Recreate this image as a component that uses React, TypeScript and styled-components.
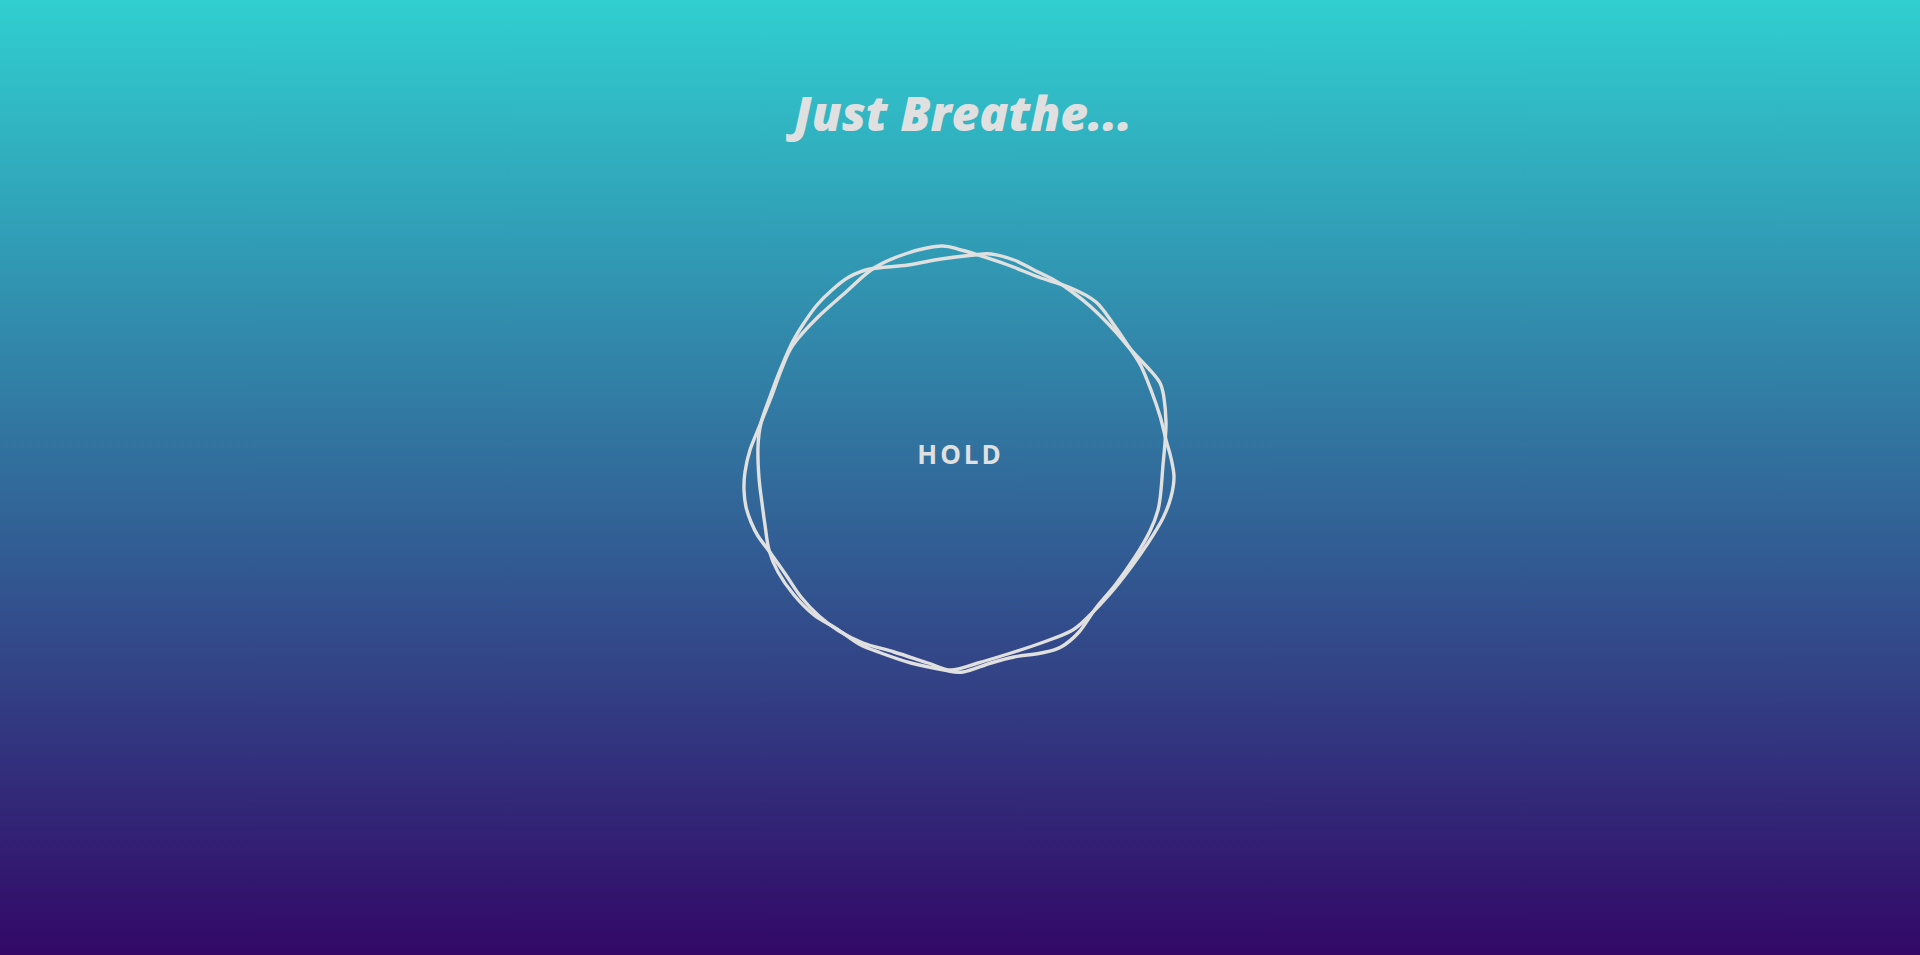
import React from "react";
import styled, { createGlobalStyle } from "styled-components";

const GlobalStyle = createGlobalStyle`
  html, body { margin: 0; padding: 0; }
  body { font-family: "Open Sans", "Noto Sans", sans-serif; }
`;

const Page = styled.main`
  height: 100vh;
  min-height: 955px;
  background: linear-gradient(to top, #330867 0%, #30cfd0 100%);
  display: flex;
  flex-direction: column;
  align-items: center;
  overflow: hidden;
`;

const Title = styled.h1`
  margin: 80px 0 0 6px;
  font-family: "Open Sans", "Noto Sans", sans-serif;
  font-size: 48px;
  line-height: 65px;
  font-weight: 800;
  font-style: italic;
  color: #e0e0e0;
`;

const Breather = styled.section`
  margin-top: 84px;
  width: 460px;
  height: 460px;
  position: relative;
  display: flex;
  align-items: center;
  justify-content: center;
`;

const Rings = styled.svg`
  position: absolute;
  inset: 0;
  width: 100%;
  height: 100%;
`;

const Phase = styled.span`
  position: relative;
  margin-bottom: 10px;
  margin-left: 1px;
  font-family: "Open Sans", "Noto Sans", sans-serif;
  font-size: 26px;
  font-weight: 700;
  letter-spacing: 3px;
  color: #e0e0e0;
`;

type Pt = [number, number];

const smoothClosed = (pts: Pt[]): string => {
  const n = pts.length;
  let d = `M ${pts[0][0]} ${pts[0][1]}`;
  for (let i = 0; i < n; i++) {
    const p0 = pts[(i - 1 + n) % n];
    const p1 = pts[i];
    const p2 = pts[(i + 1) % n];
    const p3 = pts[(i + 2) % n];
    const c1x = p1[0] + (p2[0] - p0[0]) / 6;
    const c1y = p1[1] + (p2[1] - p0[1]) / 6;
    const c2x = p2[0] - (p3[0] - p1[0]) / 6;
    const c2y = p2[1] - (p3[1] - p1[1]) / 6;
    d += ` C ${c1x.toFixed(1)} ${c1y.toFixed(1)} ${c2x.toFixed(1)} ${c2y.toFixed(1)} ${p2[0]} ${p2[1]}`;
  }
  return d + " Z";
};

const ringA: Pt[] = [
  [940, 246], [960, 250], [977, 255], [1007, 265], [1040, 278], [1070, 288],
  [1095, 302], [1113, 325], [1128, 347], [1140, 366], [1150, 390], [1159, 416],
  [1165, 440], [1170, 458], [1173, 477], [1170, 497], [1162, 518], [1147, 543],
  [1128, 570], [1108, 595], [1088, 616], [1070, 631], [1040, 643], [1010, 653],
  [977, 663], [950, 670], [927, 663], [893, 652], [862, 643], [838, 631],
  [818, 616], [800, 597], [785, 575], [768, 551], [757, 536], [750, 522],
  [745, 507], [743, 490], [744, 472], [749, 450], [759, 425], [771, 395],
  [781, 368], [792, 345], [815, 319], [845, 292], [873, 268], [907, 253],
];

const ringB: Pt[] = [
  [869, 269], [907, 265], [940, 259], [973, 255], [990, 254], [1013, 260],
  [1033, 270], [1053, 280], [1070, 291], [1090, 307], [1113, 330], [1131, 351],
  [1148, 369], [1159, 383], [1163, 398], [1165, 422], [1164, 443], [1162, 465],
  [1160, 490], [1157, 510], [1149, 531], [1134, 557], [1115, 584], [1095, 608],
  [1078, 632], [1060, 647], [1040, 653], [1013, 657], [990, 663], [962, 672],
  [943, 670], [910, 663], [880, 653], [858, 644], [836, 629], [813, 615],
  [793, 595], [777, 572], [768, 550], [764, 525], [761, 503], [758, 478],
  [757, 447], [760, 423], [770, 394], [780, 368], [791, 343], [803, 323],
  [816, 305], [831, 290], [848, 277],
];

export default function App() {
  return (
    <>
      <GlobalStyle />
      <Page>
        <Title>Just Breathe...</Title>
        <Breather>
          <Rings viewBox="729 229 460 460" fill="none" stroke="#e0e0e0" strokeWidth={3.4}>
            <path d={smoothClosed(ringA)} />
            <path d={smoothClosed(ringB)} />
          </Rings>
          <Phase>HOLD</Phase>
        </Breather>
      </Page>
    </>
  );
}
